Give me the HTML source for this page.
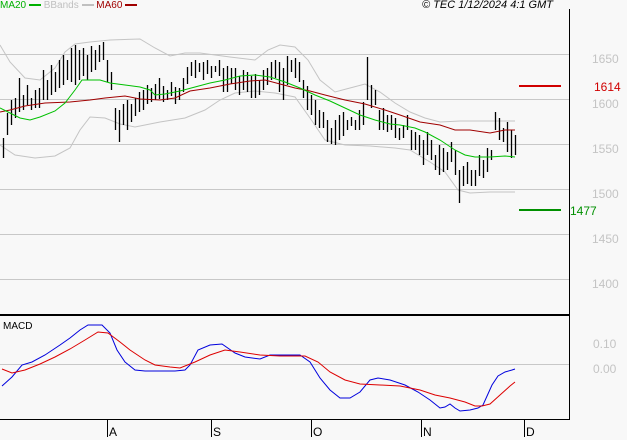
<!DOCTYPE html>
<html><head><meta charset="utf-8"><style>
html,body{margin:0;padding:0;background:#f8f8f8;}
body{width:627px;height:440px;overflow:hidden;position:relative;font-family:"Liberation Sans",sans-serif;}
.t{position:absolute;font-size:11px;font-style:italic;white-space:nowrap;}
.l{position:absolute;font-size:12px;color:#c4c4c4;letter-spacing:0px;}
</style></head><body>
<svg width="627" height="440" style="position:absolute;left:0;top:0" xmlns="http://www.w3.org/2000/svg">
<g stroke="#c8c8c8" stroke-width="1" fill="none">
<line x1="0" y1="54.5" x2="569" y2="54.5"/>
<line x1="0" y1="99.5" x2="569" y2="99.5"/>
<line x1="0" y1="144.5" x2="569" y2="144.5"/>
<line x1="0" y1="189.5" x2="569" y2="189.5"/>
<line x1="0" y1="234.5" x2="569" y2="234.5"/>
<line x1="0" y1="279.5" x2="569" y2="279.5"/>
<line x1="0" y1="364.5" x2="569" y2="364.5"/>
</g>
<line x1="569.5" y1="9" x2="569.5" y2="420" stroke="#000"/>
<line x1="0" y1="315" x2="570" y2="315" stroke="#000" stroke-width="2"/>
<line x1="0" y1="419.5" x2="570" y2="419.5" stroke="#000"/>
<g stroke="#000"><line x1="107.5" y1="419" x2="107.5" y2="437"/><line x1="211.5" y1="419" x2="211.5" y2="437"/><line x1="311.5" y1="419" x2="311.5" y2="437"/><line x1="421.5" y1="419" x2="421.5" y2="437"/><line x1="524.5" y1="419" x2="524.5" y2="437"/></g>
<g stroke="#c4c4c4" fill="none">
<polyline points="0,45 10,62 25,78 40,80 55,68 65,52 75,44 90,42 110,40 140,39 155,48 170,56 185,53 200,53 230,57 255,60 268,50 280,45 295,47 308,60 320,80 335,92 350,88 365,84 380,92 395,103 410,112 425,118 440,122 460,121 485,121 515,121"/>
<polyline points="0,145 15,155 35,158 55,156 70,148 80,130 90,117 105,118 120,124 135,127 160,122 185,118 205,110 220,100 235,93 255,91 275,93 295,97 310,118 325,140 345,145 370,146 395,148 410,150 430,162 445,172 458,190 470,193 490,192 515,192"/>
</g>
<g stroke="#000" stroke-width="1.3" fill="none">
<path d="M3.5 138V158 M7.5 113V135 M11.5 100V125 M15.5 98V118 M19.5 78V112 M23.5 95V110 M27.5 85V105 M31.5 98V110 M35.5 90V108 M39.5 88V108 M43.5 70V100 M47.5 80V100 M51.5 65V95 M55.5 72V92 M59.5 60V88 M63.5 55V85 M67.5 60V80 M71.5 48V82 M75.5 45V85 M79.5 50V80 M83.5 48V76 M87.5 55V80 M91.5 46V72 M95.5 50V70 M99.5 45V62 M103.5 42V60 M107.5 60V82 M111.5 72V90 M115.5 108V130 M119.5 110V142 M123.5 104V125 M127.5 100V130 M131.5 104V122 M135.5 98V116 M139.5 92V112 M143.5 90V110 M147.5 85V104 M151.5 88V102 M155.5 84V100 M159.5 78V99 M163.5 86V102 M167.5 90V100 M171.5 82V96 M175.5 87V104 M179.5 88V100 M183.5 78V92 M187.5 67V84 M191.5 62V76 M195.5 60V78 M199.5 63V72 M203.5 62V80 M207.5 60V74 M211.5 66V78 M215.5 66V72 M219.5 60V76 M223.5 68V92 M227.5 66V92 M231.5 68V84 M235.5 68V90 M239.5 76V95 M243.5 70V90 M247.5 72V92 M251.5 76V98 M255.5 74V98 M259.5 80V95 M263.5 70V90 M267.5 68V85 M271.5 62V80 M275.5 60V78 M279.5 62V92 M283.5 68V100 M287.5 56V85 M291.5 60V72 M295.5 58V78 M299.5 62V82 M303.5 80V98 M307.5 86V110 M311.5 95V115 M315.5 100V125 M319.5 110V128 M323.5 112V128 M327.5 120V142 M331.5 128V144 M335.5 120V145 M339.5 115V140 M343.5 112V136 M347.5 120V130 M351.5 117V126 M355.5 120V130 M359.5 110V130 M363.5 102V125 M367.5 57V100 M371.5 85V108 M375.5 90V105 M379.5 110V130 M383.5 108V130 M387.5 115V132 M391.5 115V130 M395.5 118V138 M399.5 128V140 M403.5 125V138 M407.5 115V130 M411.5 130V150 M415.5 132V150 M419.5 135V155 M423.5 140V165 M427.5 132V155 M431.5 140V160 M435.5 155V170 M439.5 145V175 M443.5 148V172 M447.5 152V170 M451.5 142V162 M455.5 150V175 M459.5 170V203 M463.5 166V186 M467.5 162V184 M471.5 170V186 M475.5 170V186 M479.5 155V176 M483.5 160V178 M487.5 148V172 M491.5 150V160 M495.5 112V130 M499.5 118V140 M503.5 128V142 M507.5 122V152 M511.5 130V158 M515.5 135V155"/>
</g>
<polyline fill="none" stroke="#a00000" points="0,112 10,110 25,106 45,103 70,102 90,100 105,98 125,96 140,99 160,100 175,98 190,91 210,88 230,84 250,81 265,80 280,84 295,88 310,91 325,95 345,100 365,104 385,110 400,115 420,122 440,125 455,130 470,130 490,133 505,130 515,130"/>
<polyline fill="none" stroke="#00c000" points="0,108 8,112 20,118 30,120 40,117 55,111 65,103 75,90 82,80 90,80 100,80 110,83 125,85 140,87 150,90 155,95 165,94 180,91 195,87 210,83 225,80 240,76 255,75 270,77 285,82 300,88 315,95 330,101 345,108 360,115 375,120 390,124 400,125 415,128 425,132 440,140 455,150 465,155 475,157 490,157 505,156 515,157"/>
<line x1="519" y1="86" x2="561" y2="86" stroke="#d00000" stroke-width="2"/>
<line x1="519" y1="210" x2="561" y2="210" stroke="#009000" stroke-width="2"/>
<polyline fill="none" stroke="#0000dd" points="2,386 12,377 22,365 32,362 45,355 60,345 70,338 80,330 88,325 102,325 110,333 117,350 125,362 135,370 145,371 160,371 175,371 185,370 190,365 198,350 210,345 222,344 235,353 245,357 260,359 270,355 285,355 300,355 310,362 320,378 330,390 340,398 350,398 360,392 370,380 378,378 390,380 405,385 418,392 430,400 440,408 445,407 450,404 455,408 460,411 470,410 478,408 483,405 492,385 498,376 505,372 512,370 515,369"/>
<polyline fill="none" stroke="#dd0000" points="2,369 12,373 25,370 40,364 55,357 70,349 85,340 98,332 108,333 120,342 130,350 145,360 155,365 170,367 180,368 195,362 210,355 225,350 240,352 260,355 280,356 305,356 318,362 330,372 345,380 360,384 380,385 400,386 420,390 435,395 450,398 465,402 475,406 482,406 490,404 500,395 510,386 515,382"/>
</svg>
<div class="t" style="left:0;top:0;color:#00b000;font-style:normal;font-size:10px;">MA20 <span style="display:inline-block;width:12px;border-top:2px solid #00b000;vertical-align:middle"></span> <span style="color:#c0c0c0">BBands <span style="display:inline-block;width:12px;border-top:2px solid #c0c0c0;vertical-align:middle"></span></span> <span style="color:#a00000">MA60 <span style="display:inline-block;width:12px;border-top:2px solid #a00000;vertical-align:middle"></span></span></div>
<div class="t" style="left:422px;top:-1px;color:#000;font-size:11px;">© TEC 1/12/2024 4:1 GMT</div>
<div class="l" style="left:592px;top:52px">1650</div>
<div class="l" style="left:592px;top:97px">1600</div>
<div class="l" style="left:592px;top:142px">1550</div>
<div class="l" style="left:592px;top:187px">1500</div>
<div class="l" style="left:592px;top:232px">1450</div>
<div class="l" style="left:592px;top:277px">1400</div>
<div class="l" style="left:593px;top:337px">0.10</div>
<div class="l" style="left:593px;top:362px">0.00</div>
<div class="l" style="left:594px;top:80px;color:#d00000">1614</div>
<div class="l" style="left:570px;top:204px;color:#009000">1477</div>
<div class="t" style="left:3px;top:321px;font-style:normal;font-size:10px;color:#000">MACD</div>
<div class="t" style="left:109px;top:425px;font-style:normal;font-size:12px;color:#000">A</div>
<div class="t" style="left:213px;top:425px;font-style:normal;font-size:12px;color:#000">S</div>
<div class="t" style="left:313px;top:425px;font-style:normal;font-size:12px;color:#000">O</div>
<div class="t" style="left:423px;top:425px;font-style:normal;font-size:12px;color:#000">N</div>
<div class="t" style="left:526px;top:425px;font-style:normal;font-size:12px;color:#000">D</div>
</body></html>
